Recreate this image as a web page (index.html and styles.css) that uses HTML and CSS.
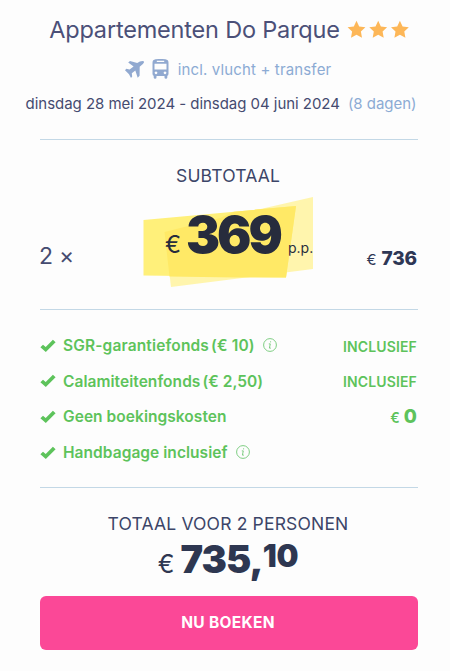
FILE: index.html
```html
<!DOCTYPE html>
<html lang="nl">
<head>
  <meta charset="UTF-8">
  <meta name="viewport" content="width=device-width, initial-scale=1.0">
  <title>Appartementen Do Parque</title>
  <link rel="stylesheet" href="styles.css">
</head>
<body>
  <div class="booking">
    <div class="booking__header">
      <div class="booking__title">
        <span class="booking__name">Appartementen Do Parque</span>
        <svg class="booking__stars" width="62" height="20" viewBox="0 0 62 20">
          <path d="M9.500.8l2.700 5.700 6.200.8-4.500 4.300 1.100 6.200-5.500-3-5.500 3 1.100-6.200L.6 7.300l6.200-.8z"/>
          <path d="M31.200.8l2.700 5.700 6.200.8-4.500 4.300 1.100 6.200-5.500-3-5.500 3 1.100-6.200-4.500-4.300 6.200-.8z"/>
          <path d="M52.900.8l2.700 5.700 6.200.8-4.500 4.300 1.100 6.200-5.500-3-5.500 3 1.100-6.200-4.500-4.300 6.200-.8z"/>
        </svg>
      </div>
      <div class="booking__transport">
        <svg class="booking__plane" width="20" height="19" viewBox="0 0 20 19">
          <path d="M3.200 2.600L5 1l7.200 2.100 2.700-1.500C16.500.7 18.500.7 19 1.500c.4.900-.7 2.300-2 3.300l-2.300 2L14.600 15.800 12.700 17.700 10.300 10.600 6.800 13.300 7.200 16.400 6 17.900 4 14.200 0 10.200 1.300 8.700 4.600 9.500 8.600 6.500z"/>
        </svg>
        <svg class="booking__bus" width="17" height="20" viewBox="0 0 17 19" preserveAspectRatio="none">
          <path fill-rule="evenodd" d="M3.500.3Q8.500-.4 13.500.3 16.500.8 16.500 3.500V14q0 1.700-1.200 2v1.500q0 1.200-1.400 1.200t-1.400-1.200v-1.300h-8v1.300q0 1.200-1.400 1.200t-1.400-1.200V16Q.5 15.700.5 14V3.500Q.5.8 3.500.3zM4.800 1.700v1.200h7.400V1.700zM2.500 4.500V10h12V4.500zM4 11.800a1.300 1.300 0 1 0 .01 0zM13 11.800a1.300 1.300 0 1 0 .01 0z"/>
        </svg>
        <span class="booking__incl">incl. vlucht + transfer</span>
      </div>
      <div class="booking__dates">
        <span class="booking__period">dinsdag 28 mei 2024 - dinsdag 04 juni 2024</span>
        <span class="booking__days">(8 dagen)</span>
      </div>
    </div>

    <div class="booking__subtotal">
      <div class="booking__label booking__label_sub">SUBTOTAAL</div>
      <div class="booking__calc">
        <div class="booking__count">2 ×</div>
        <div class="price">
          <svg class="price__marker" width="170" height="90" viewBox="0 0 170 90">
            <polygon fill="#fff5ad" points="21.500,35 91,18 170,0 170,72 28,90"/>
            <polygon fill="#fff07a" points="0.500,23 153,9 143,80.500 0.500,78.500"/>
            <polygon fill="#ffe966" points="21.500,35 77,21 91,14.700 153,9 143,80.500 93,80.500 26.500,79.500"/>
          </svg>
          <span class="price__currency">€</span>
          <span class="price__value">369</span>
          <span class="price__pp">p.p.</span>
        </div>
        <div class="booking__sum"><span class="booking__euro">€</span><b>736</b></div>
      </div>
    </div>

    <ul class="fees">
      <li class="fees__item">
        <svg class="fees__check" width="16" height="14" viewBox="0 0 16 14"><path d="M.4 8.200L3 5.700l2.700 2.400L12.900.7l2.700 2.500-9.800 9.900z"/></svg>
        <span class="fees__name fees__name_sgr">SGR-garantiefonds <span class="fees__price">(€ 10)</span></span>
        <svg class="fees__info" width="14" height="14" viewBox="0 0 14 14"><circle cx="7" cy="7" r="6.400"/><path d="M5.800 5.900h1.500l-.9 4.200h1.500M7.600 3.300v1.100"/></svg>
        <span class="fees__value">INCLUSIEF</span>
      </li>
      <li class="fees__item">
        <svg class="fees__check" width="16" height="14" viewBox="0 0 16 14"><path d="M.4 8.200L3 5.700l2.700 2.400L12.900.7l2.700 2.500-9.800 9.900z"/></svg>
        <span class="fees__name">Calamiteitenfonds <span class="fees__price">(€ 2,50)</span></span>
        <span class="fees__value">INCLUSIEF</span>
      </li>
      <li class="fees__item">
        <svg class="fees__check" width="16" height="14" viewBox="0 0 16 14"><path d="M.4 8.200L3 5.700l2.700 2.400L12.900.7l2.700 2.500-9.800 9.900z"/></svg>
        <span class="fees__name">Geen boekingskosten</span>
        <span class="fees__value fees__value_zero">€ <b>0</b></span>
      </li>
      <li class="fees__item">
        <svg class="fees__check" width="16" height="14" viewBox="0 0 16 14"><path d="M.4 8.200L3 5.700l2.700 2.400L12.900.7l2.700 2.500-9.800 9.900z"/></svg>
        <span class="fees__name">Handbagage inclusief</span>
        <svg class="fees__info fees__info_bag" width="14" height="14" viewBox="0 0 14 14"><circle cx="7" cy="7" r="6.400"/><path d="M5.800 5.900h1.500l-.9 4.200h1.500M7.600 3.300v1.100"/></svg>
      </li>
    </ul>

    <div class="booking__total">
      <div class="booking__label booking__label_total">TOTAAL VOOR 2 PERSONEN</div>
      <div class="total">
        <span class="total__currency">€</span>
        <span class="total__value">735,</span>
        <span class="total__cents">10</span>
      </div>
    </div>
    <button class="booking__btn" type="button">NU BOEKEN</button>
  </div>
</body>
</html>
```

FILE: styles.css
```css
* {
  box-sizing: border-box;
}
body {
  margin: 0;
  background-color: #fdfdfd;
  font-family: Inter, "Liberation Sans", sans-serif;
  color: #2e3755;
}
.booking {
  width: 450px;
  height: 671px;
  padding: 14px 32px 0 40px;
  white-space: nowrap;
}
.booking__header {
  height: 126px;
  border-bottom: 1px solid #c3d8e6;
  display: flex;
  flex-direction: column;
  align-items: center;
}
.booking__title {
  display: flex;
  align-items: center;
  gap: 7px;
  height: 32px;
}
.booking__name {
  font-size: 23.5px;
  line-height: 30px;
  letter-spacing: -0.19px;
  color: #4b5078;
}
.booking__stars {
  fill: #fdb758;
}
.booking__transport {
  display: flex;
  align-items: center;
  height: 20px;
  margin: 13px 0 0 -2px;
  color: #8cabd4;
}
.booking__plane,
.booking__bus {
  fill: #91a9d0;
}
.booking__bus {
  margin: 0 9px 0 7px;
}
.booking__incl {
  font-size: 15px;
  letter-spacing: 0.15px;
}
.booking__dates {
  display: flex;
  gap: 8px;
  margin: 15px 0 0 -16px;
  font-size: 15px;
  line-height: 20px;
  letter-spacing: -0.04px;
  color: #454b70;
}
.booking__days {
  color: #8cabd4;
}

/* subtotal */
.booking__subtotal {
  height: 170px;
  padding-top: 26px;
  border-bottom: 1px solid #c3d8e6;
}
.booking__label {
  margin-left: -2px;
  font-size: 17.5px;
  line-height: 20px;
  letter-spacing: 0.17px;
  text-align: center;
  color: #3c4568;
}
.booking__calc {
  display: grid;
  grid-template-columns: 103px 170px 1fr;
  margin-top: 11px;
  height: 90px;
}
.booking__count {
  padding-top: 44px;
  margin-left: -1px;
  font-size: 23px;
  line-height: 30px;
  letter-spacing: -0.3px;
  color: #454b70;
}
.price {
  position: relative;
  display: flex;
  align-items: baseline;
  height: 90px;
  line-height: 76px;
  padding-left: 22px;
  color: #272c3d;
}
.price__marker {
  position: absolute;
  left: 0;
  top: 0;
}
.price__currency,
.price__value,
.price__pp {
  position: relative;
}
.price__currency {
  font-size: 24px;
}
.price__value {
  margin-left: 5px;
  font-size: 51px;
  font-weight: 900;
  letter-spacing: -3px;
}
.price__pp {
  margin-left: 8px;
  font-size: 14px;
}
.booking__sum {
  padding-top: 48px;
  font-size: 19px;
  line-height: 28px;
  text-align: right;
}
.booking__sum b {
  margin-right: 1px;
  font-weight: 800;
  letter-spacing: -0.1px;
}
.booking__euro {
  margin-right: 5px;
  font-size: 15px;
}

/* fees */
.fees {
  height: 178px;
  margin: 0;
  padding: 18px 0 0;
  list-style: none;
  border-bottom: 1px solid #c3d8e6;
  color: #5dc35b;
}
.fees__item {
  display: flex;
  align-items: center;
  height: 35.6px;
}
.fees__check {
  margin-right: 7px;
  fill: #5dc35b;
}
.fees__name {
  font-size: 15.5px;
  font-weight: 600;
  letter-spacing: 0.05px;
}
.fees__name_sgr {
  letter-spacing: 0.15px;
}
.fees__price {
  margin-left: -2px;
}
.fees__info {
  margin: -1px 0 0 8px;
  fill: none;
  stroke: #7fce83;
}
.fees__value {
  margin: 1px 1px 0 auto;
  font-size: 14px;
  font-weight: 600;
  letter-spacing: 0.15px;
}
.fees__value_zero {
  margin-top: 0;
}
.fees__value_zero b {
  font-size: 19px;
  font-weight: 800;
}

/* total */
.booking__total {
  height: 108px;
  padding-top: 26px;
}
.total {
  display: flex;
  justify-content: center;
  align-items: baseline;
  margin-left: -2px;
  line-height: 50px;
  color: #2e3751;
}
.total__currency {
  margin-right: 6px;
  font-size: 25px;
}
.total__value {
  font-size: 38px;
  font-weight: 900;
  letter-spacing: -1px;
}
.total__cents {
  position: relative;
  top: -6px;
  font-size: 31px;
  font-weight: 900;
  letter-spacing: -0.3px;
}
.booking__btn {
  display: block;
  width: 378px;
  height: 54px;
  padding: 0 2px 2px 0;
  border: 0;
  border-radius: 6px;
  background-color: #fb4897;
  font: 700 15.5px Inter, "Liberation Sans", sans-serif;
  letter-spacing: 0.3px;
  color: #fff;
}
```
